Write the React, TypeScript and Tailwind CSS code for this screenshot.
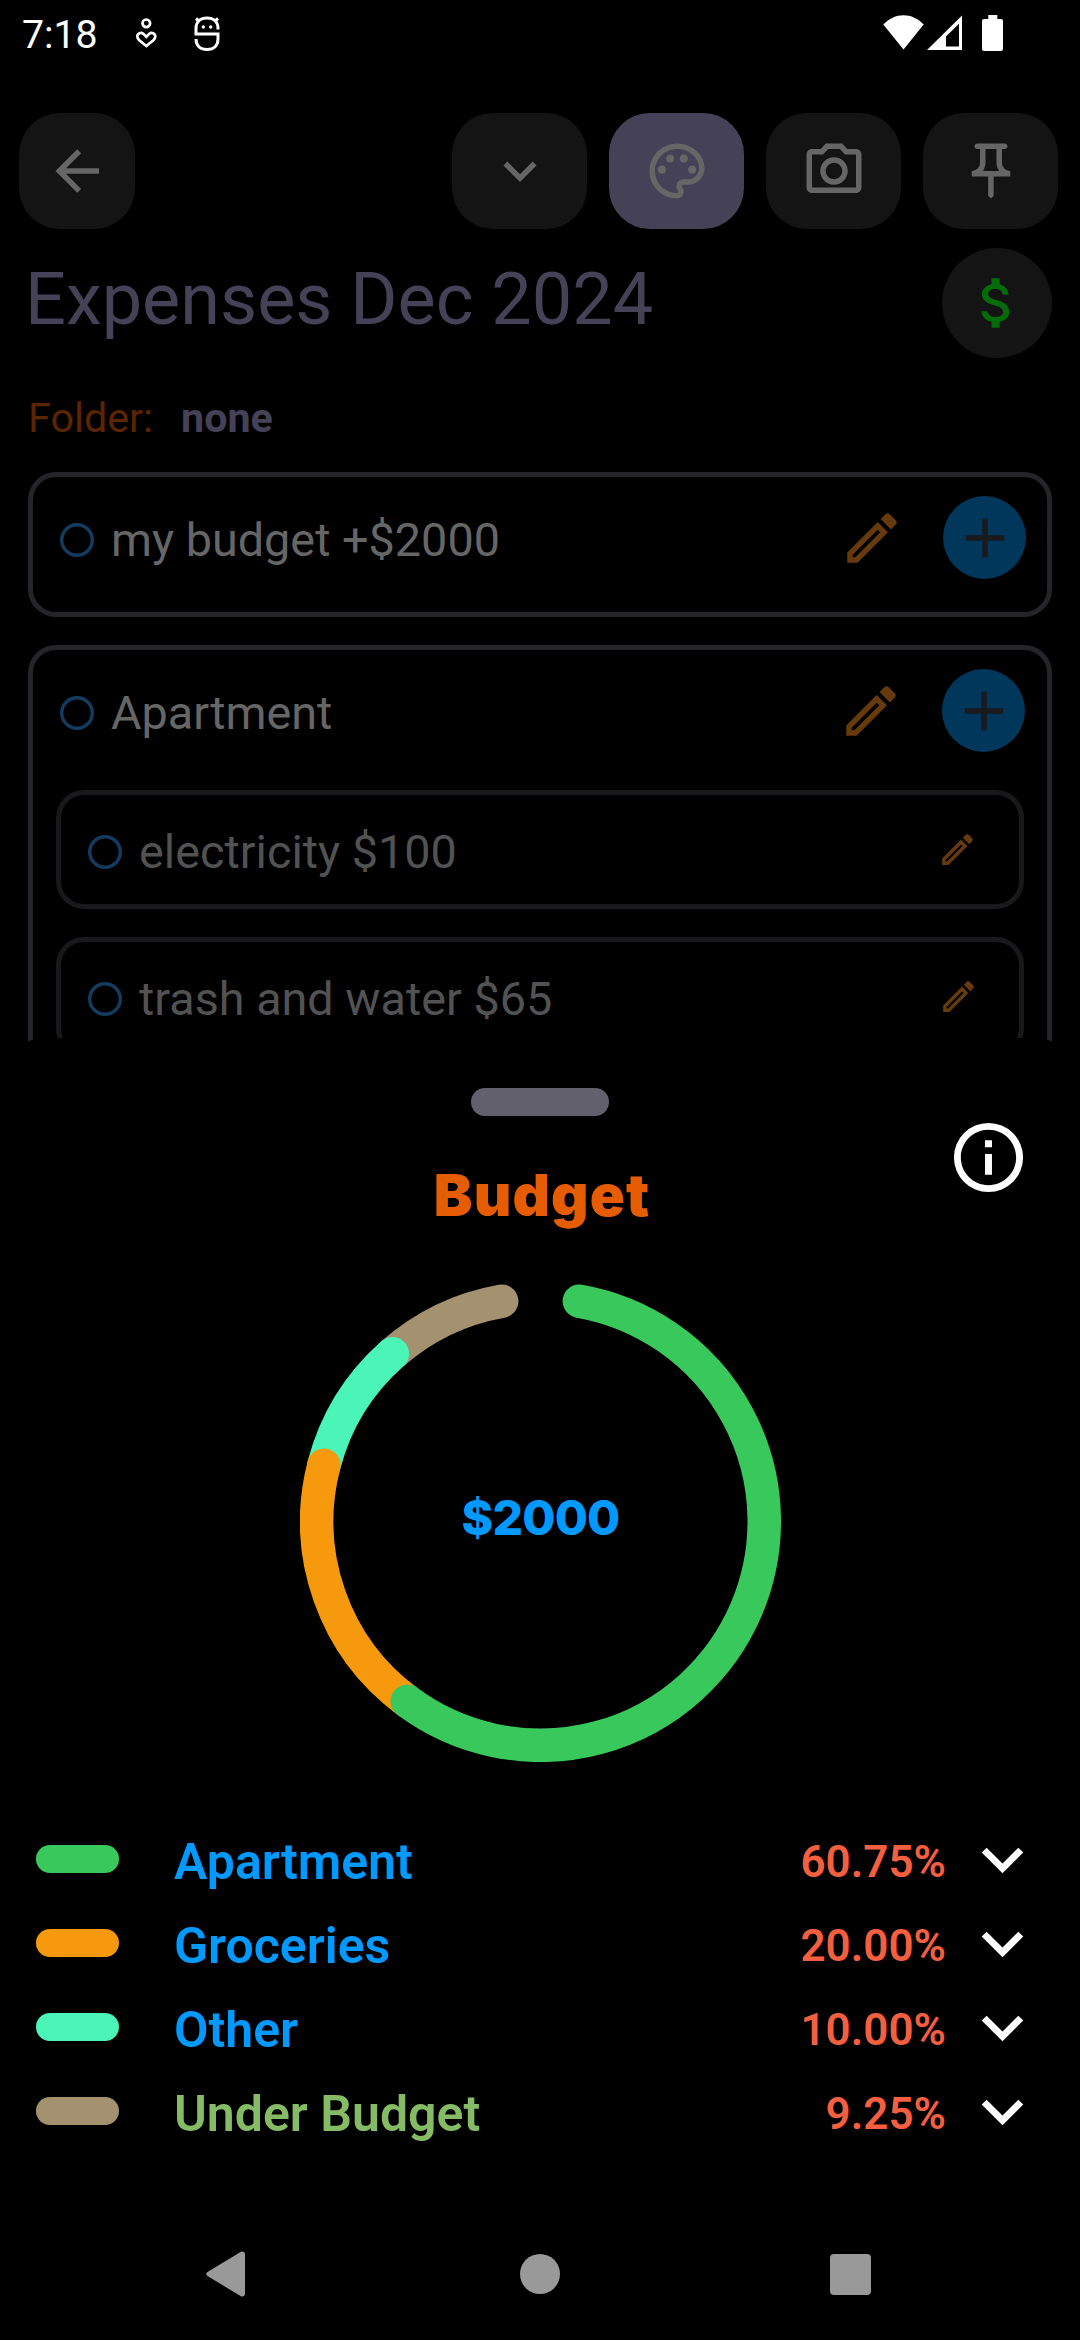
import type { ReactNode } from "react";

const paths = {
  back: "M20,11V13H8L13.5,18.5L12.08,19.92L4.16,12L12.08,4.08L13.5,5.5L8,11H20Z",
  chevron: "M7.41,8.58L12,13.17L16.59,8.58L18,10L12,16L6,10L7.41,8.58Z",
  palette:
    "M12 22C6.49 22 2 17.51 2 12S6.49 2 12 2s10 4.04 10 9c0 3.31-2.69 6-6 6h-1.77c-.28 0-.5.22-.5.5 0 .12.05.23.13.33.41.47.64 1.06.64 1.67A2.5 2.5 0 0 1 12 22zm0-18c-4.41 0-8 3.59-8 8s3.59 8 8 8c.28 0 .5-.22.5-.5a.54.54 0 0 0-.14-.35c-.41-.46-.63-1.05-.63-1.65a2.5 2.5 0 0 1 2.5-2.5H16c2.21 0 4-1.79 4-4 0-3.86-3.59-7-8-7z M5 11.5a1.5 1.5 0 1 0 3 0a1.5 1.5 0 1 0-3 0z M8 7.5a1.5 1.5 0 1 0 3 0a1.5 1.5 0 1 0-3 0z M13 7.5a1.5 1.5 0 1 0 3 0a1.5 1.5 0 1 0-3 0z M16 11.5a1.5 1.5 0 1 0 3 0a1.5 1.5 0 1 0-3 0z",
  camera:
    "M14.12 4l1.83 2H20v12H4V6h4.05l1.83-2h4.24M15 2H9L7.17 4H4c-1.1 0-2 .9-2 2v12c0 1.1.9 2 2 2h16c1.1 0 2-.9 2-2V6c0-1.1-.9-2-2-2h-3.17L15 2zm-3 7c1.65 0 3 1.35 3 3s-1.35 3-3 3-3-1.35-3-3 1.35-3 3-3m0-2c-2.76 0-5 2.24-5 5s2.24 5 5 5 5-2.24 5-5-2.24-5-5-5z",
  pin: "M14,4v5c0,1.12,0.37,2.16,1,3H9c0.65-0.86,1-1.9,1-3V4H14 M17,2H7C6.45,2,6,2.45,6,3c0,0.55,0.45,1,1,1c0,0,0,0,1,0l0,5c0,1.66-1.34,3-3,3v2h5.97v7l1,1l1-1v-7H19v-2c-1.66,0-3-1.34-3-3V4c1,0,1,0,1,0c0.55,0,1-0.45,1-1C18,2.45,17.55,2,17,2z",
  dollar:
    "M11.8 10.9c-2.27-.59-3-1.2-3-2.15 0-1.09 1.01-1.85 2.7-1.85 1.78 0 2.44.85 2.5 2.1h2.21c-.07-1.72-1.12-3.3-3.21-3.81V3h-3v2.16c-1.94.42-3.5 1.68-3.5 3.61 0 2.31 1.91 3.46 4.7 4.13 2.5.6 3 1.48 3 2.41 0 .69-.49 1.79-2.7 1.79-2.06 0-2.87-.92-2.98-2.1h-2.2c.12 2.19 1.76 3.42 3.68 3.83V21h3v-2.15c1.95-.37 3.5-1.5 3.5-3.55 0-2.84-2.43-3.81-4.7-4.4z",
  pencil:
    "M14.06,9L15,9.94L5.92,19H5V18.08L14.06,9M17.66,3C17.41,3 17.15,3.1 16.96,3.29L15.13,5.12L18.88,8.87L20.71,7.04C21.1,6.65 21.1,6 20.71,5.63L18.37,3.29C18.17,3.09 17.92,3 17.66,3M14.06,6.19L3,17.25V21H6.75L17.81,9.94L14.06,6.19Z",
  plus: "M19,13H13V19H11V13H5V11H11V5H13V11H19V13Z",
  info: "M11,9H13V7H11M12,20C7.59,20 4,16.41 4,12C4,7.59 7.59,4 12,4C16.41,4 20,7.59 20,12C20,16.41 16.41,20 12,20M12,2A10,10 0 0,0 2,12A10,10 0 0,0 12,22A10,10 0 0,0 22,12A10,10 0 0,0 12,2M11,17H13V11H11V17Z",
};

function Icon({ name, className }: { name: keyof typeof paths; className: string }) {
  return (
    <svg viewBox="0 0 24 24" fill="currentColor" className={`shrink-0 ${className}`}>
      <path d={paths[name]} />
    </svg>
  );
}

function StatusBar() {
  return (
    <div className="flex h-[113px] shrink-0 items-start text-white">
      <span className="ml-[22px] mt-[11px] w-[113px] text-[39.25px] leading-[49px]">7:18</span>
      <svg viewBox="0 0 22 32" className="mt-[17px] h-8 w-[22px]" fill="none" stroke="currentColor" strokeWidth="2.7">
        <circle cx="11.3" cy="6.3" r="3.8" />
        <path d="M11.3 19.800L8.500 16.900C6.200 14.700 2.300 16.200 2.300 19.500C2.300 21 3.100 22.100 4.300 23.300L11.300 29L18.300 23.300C19.500 22.100 20.300 21 20.300 19.500C20.300 16.200 16.400 14.700 14.100 16.900Z" />
      </svg>
      <svg viewBox="0 0 26 37" className="ml-[37px] mt-[15px] h-[37px] w-[26px]" fill="none" stroke="currentColor" strokeWidth="3">
        <path d="M24 14.500V13.500C24 6.500 19.500 3 13 3S2 6.500 2 13.500V19H24V24C24 31 19.500 34.500 13 34.500S2 31 2 24" />
        <path d="M2 3.500L5.500 6.500M24 3.500L20.500 6.500" strokeWidth="3" />
        <circle cx="9.300" cy="12" r="1.700" fill="currentColor" stroke="none" />
        <circle cx="16.700" cy="12" r="1.700" fill="currentColor" stroke="none" />
      </svg>
      <div className="grow" />
      <svg viewBox="0 0 41 35" className="mt-[15px] h-[35px] w-[41px]" fill="currentColor">
        <path d="M0.300 9.500C6 3.500 13 0.200 20.500 0.200S35 3.500 40.700 9.500L20.500 34.500z" />
      </svg>
      <svg viewBox="0 0 35 35" className="ml-[3px] mt-[15px] h-[35px] w-[35px]" fill="currentColor">
        <path fillRule="evenodd" d="M35 0.500V35H0zM32 8.700L19 21.500V31.500H32z" />
      </svg>
      <svg viewBox="0 0 21 36" className="ml-5 mr-[77px] mt-[15px] h-9 w-[21px]" fill="currentColor">
        <path d="M6.300 0H15.300V4H19a2 2 0 0 1 2 2V34a2 2 0 0 1-2 2H2a2 2 0 0 1-2-2V6a2 2 0 0 1 2-2H6.300z" />
      </svg>
    </div>
  );
}

function ToolButton({ name, className }: { name: keyof typeof paths; className: string }) {
  return (
    <button className={`flex h-[116px] items-center justify-center rounded-[41px] text-[#666666] ${className}`}>
      <Icon name={name} className="h-[66px] w-[66px]" />
    </button>
  );
}

function Ring() {
  return (
    <svg viewBox="0 0 34 34" className="h-[34px] w-[34px] shrink-0 text-[#143b60]" fill="none">
      <circle cx="17" cy="17" r="15.300" stroke="currentColor" strokeWidth="3.400" />
    </svg>
  );
}

function Card({ title, className, actionsClass, children }: { title: string; className: string; actionsClass: string; children?: ReactNode }) {
  return (
    <section className={`mx-7 rounded-[28px] border-[5px] border-[#252429] ${className}`}>
      <div className="flex h-[126px] items-center pl-[27px]">
        <Ring />
        <span className="ml-[17px] text-[46.75px] leading-[54px] text-[#666666]">{title}</span>
        <div className={`-mt-[5px] ml-auto flex items-center gap-[38px] ${actionsClass}`}>
          <Icon name="pencil" className="h-[66px] w-[66px] text-[#663a0c]" />
          <span className="flex h-[83px] w-[83px] items-center justify-center rounded-full bg-[#00375b] text-[#191a1e]">
            <Icon name="plus" className="h-[66px] w-[66px]" />
          </span>
        </div>
      </div>
      {children}
    </section>
  );
}

function SubItem({ title, iconClass }: { title: string; iconClass: string }) {
  return (
    <div className="mx-[23px] mb-7 flex h-[119px] items-center rounded-[28px] border-[5px] border-[#19191b] pl-[27px] pt-[5px]">
      <Ring />
      <span className="ml-[17px] text-[46.75px] leading-[54px] text-[#525252]">{title}</span>
      <Icon name="pencil" className={`-mt-[5px] ml-auto h-[41px] w-[41px] text-[#663a0c] ${iconClass}`} />
    </div>
  );
}

const entries = [
  { label: "Apartment", percent: 60.75, color: "#38c85b", pill: "bg-[#38c85b]", text: "text-[#0099ff]" },
  { label: "Groceries", percent: 20, color: "#f6990c", pill: "bg-[#f6990c]", text: "text-[#0099ff]" },
  { label: "Other", percent: 10, color: "#4bf5b8", pill: "bg-[#4bf5b8]", text: "text-[#0099ff]" },
  { label: "Under Budget", percent: 9.25, color: "#a39170", pill: "bg-[#a39170]", text: "text-[#86bb65]" },
];

function DonutChart() {
  const c = 240.5;
  const r = 223.75;
  const point = (deg: number) => {
    const a = (deg * Math.PI) / 180;
    return `${c + r * Math.sin(a)} ${c - r * Math.cos(a)}`;
  };
  let angle = 10;
  const arcs = entries.map((e) => {
    const start = angle;
    angle += e.percent * 3.4;
    return {
      color: e.color,
      d: `M${point(start)}A${r} ${r} 0 ${angle - start > 180 ? 1 : 0} 1 ${point(angle)}`,
    };
  });
  return (
    <div className="ml-px mt-[50px] grid h-[481px] w-[481px] place-items-center">
      <svg viewBox="0 0 481 481" className="col-start-1 row-start-1 h-[481px] w-[481px]" fill="none">
        {arcs.reverse().map((a) => (
          <path key={a.color} d={a.d} stroke={a.color} strokeWidth="33.500" strokeLinecap="round" />
        ))}
      </svg>
      <span className="col-start-1 row-start-1 -mt-[7px] font-['Inter'] text-[48px] font-extrabold leading-[60px] tracking-[-0.8px] text-[#0099ff]">$2000</span>
    </div>
  );
}

export default function App() {
  return (
    <div className="flex h-[2340px] w-[1080px] flex-col overflow-hidden bg-black font-['Roboto',sans-serif]">
      <main className="flex h-[1045px] shrink-0 flex-col overflow-hidden">
        <StatusBar />
        <header className="flex shrink-0 gap-[22px] pl-[19px] pr-[22px]">
          <ToolButton name="back" className="mr-auto w-[116px] bg-[#141414]" />
          <ToolButton name="chevron" className="w-[135px] bg-[#141414]" />
          <ToolButton name="palette" className="w-[135px] bg-[#454156]" />
          <ToolButton name="camera" className="w-[135px] bg-[#141414]" />
          <ToolButton name="pin" className="w-[135px] bg-[#141414]" />
        </header>
        <div className="mt-[19px] flex h-[110px] shrink-0 justify-between pl-[25px] pr-7">
          <h1 className="mt-[10px] text-[72px] leading-[84px] text-[#454156]">Expenses Dec 2024</h1>
          <span className="flex h-[110px] w-[110px] items-center justify-center rounded-full bg-[#141414] text-[#046a0a]">
            <Icon name="dollar" className="h-[66px] w-[66px]" />
          </span>
        </div>
        <p className="ml-7 mt-[35px] flex h-[79px] shrink-0 gap-[28px] text-[41.25px] leading-[50px]">
          <span className="text-[#5c2500]">Folder:</span>
          <span className="font-bold text-[#454156]">none</span>
        </p>
        <Card title="my budget +$2000" className="h-[145px] shrink-0" actionsClass="mr-[21px]" />
        <Card title="Apartment" className="mt-7 h-[600px] shrink-0" actionsClass="mr-[22px]">
          <div className="mt-[14px]">
            <SubItem title="electricity $100" iconClass="mr-[41px]" />
            <SubItem title="trash and water $65" iconClass="mr-10" />
          </div>
        </Card>
      </main>

      <section className="relative -mt-[7px] flex grow flex-col items-center rounded-t-[45px] bg-black">
        <div className="mt-[50px] h-7 w-[138px] shrink-0 rounded-[14px] bg-[#61606c]" />
        <div className="grid h-[115px] w-full shrink-0 grid-cols-[1fr_auto_1fr]">
          <h2 className="col-start-2 ml-[4px] mt-[45px] font-['Inter'] text-[58px] font-black leading-[68px] tracking-[1.1px] text-[#e65c00]">Budget</h2>
          <Icon name="info" className="mr-[50px] h-[83px] w-[83px] justify-self-end text-white" />
        </div>
        <DonutChart />
        <ul className="mt-[55px] w-full pl-9 pr-[36px]">
          {entries.map((e) => (
            <li key={e.label} className="flex h-[84px] items-center">
              <span className={`h-7 w-[83px] rounded-[14px] ${e.pill}`} />
              <span className={`ml-[55px] mt-[6px] text-[50px] font-semibold leading-[60px] ${e.text}`}>{e.label}</span>
              <span className="ml-auto mt-[6px] text-[44px] font-semibold leading-[54px] text-[#f35f3f]">{e.percent.toFixed(2)}%</span>
              <Icon name="chevron" className="ml-[15px] h-[83px] w-[83px] text-white" />
            </li>
          ))}
        </ul>
        <nav className="mt-auto flex h-[132px] w-full shrink-0 items-center justify-between pl-[206px] pr-[209px] text-[#999999]">
          <svg viewBox="0 0 39 46" className="h-[46px] w-[39px]" fill="currentColor">
            <path d="M1.500 21L34.500 1c2-1.200 4.500-.2 4.500 2V43c0 2.200-2.500 3.200-4.500 2L1.500 25c-1.700-1-1.700-3 0-4z" />
          </svg>
          <span className="ml-[5px] h-10 w-10 rounded-full bg-[#999999]" />
          <span className="h-[41px] w-[41px] rounded-[4px] bg-[#999999]" />
        </nav>
      </section>
    </div>
  );
}
